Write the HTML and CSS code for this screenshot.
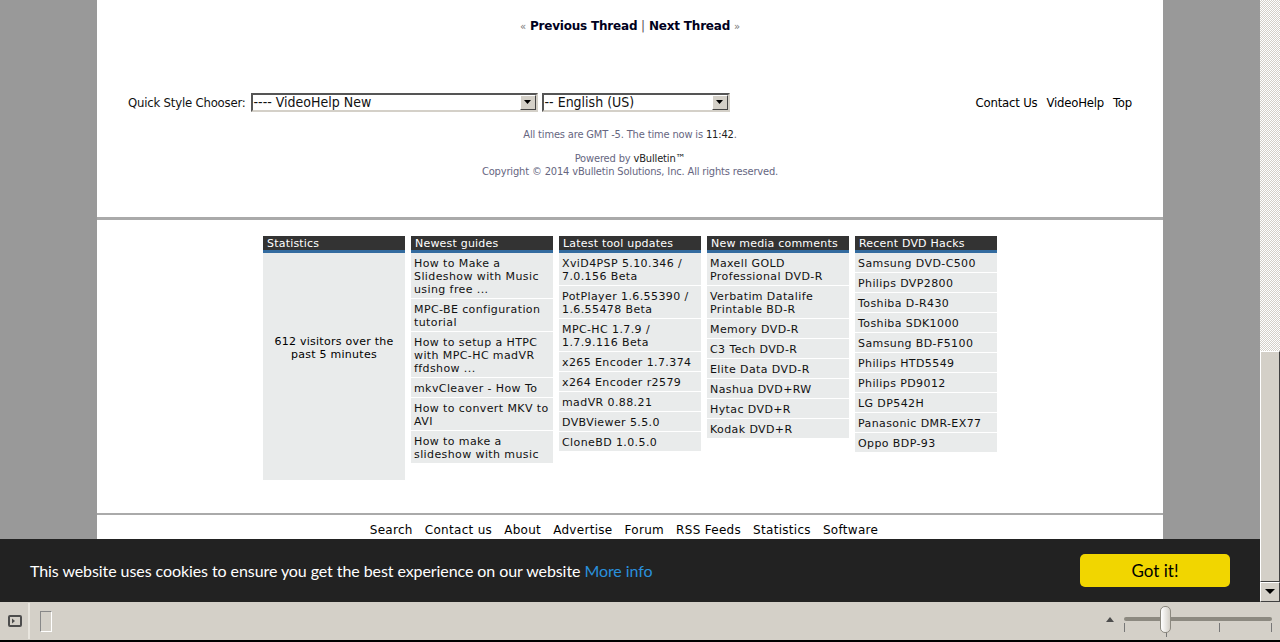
FILE: index.html
```html
<!DOCTYPE html>
<html lang="en">
<head>
<meta charset="utf-8">
<title>VideoHelp Forum</title>
<link rel="stylesheet" href="styles.css">
</head>
<body>
<div class="viewport">
  <div class="page-area">
    <div class="page">
      <div class="thread-nav">
        <span class="dim">«</span> <a href="#">Previous Thread</a> <span class="sep">|</span> <a href="#">Next Thread</a> <span class="dim">»</span>
      </div>
      <div class="chooser-row">
        <div class="chooser">
          <span class="chooser-label">Quick Style Chooser:</span>
          <div class="fake-select style-select"><span>---- VideoHelp New</span><i class="arrow"><svg width="9" height="5" viewBox="0 0 9 5"><path d="M1 0h7L4.500 4z" fill="#000"/></svg></i></div>
          <div class="fake-select lang-select"><span>-- English (US)</span><i class="arrow"><svg width="9" height="5" viewBox="0 0 9 5"><path d="M1 0h7L4.500 4z" fill="#000"/></svg></i></div>
        </div>
        <div class="chooser-links"><a href="#">Contact Us</a><a href="#">VideoHelp</a><a href="#">Top</a></div>
      </div>
      <div class="times">All times are GMT -5. The time now is <span class="dark">11:42</span>.</div>
      <div class="powered">Powered by <span class="dark">vBulletin™</span><br>Copyright © 2014 vBulletin Solutions, Inc. All rights reserved.</div>
      <div class="columns">
        <section class="col">
          <h3>Statistics</h3>
          <div class="stats">612 visitors over the past 5 minutes</div>
        </section>
        <section class="col">
          <h3>Newest guides</h3>
          <a class="row" href="#">How to Make a Slideshow with Music using free ...</a>
          <a class="row" href="#">MPC-BE configuration tutorial</a>
          <a class="row" href="#">How to setup a HTPC with MPC-HC madVR ffdshow ...</a>
          <a class="row" href="#">mkvCleaver - How To</a>
          <a class="row" href="#">How to convert MKV to AVI</a>
          <a class="row" href="#">How to make a slideshow with music</a>
        </section>
        <section class="col">
          <h3>Latest tool updates</h3>
          <a class="row" href="#">XviD4PSP 5.10.346 / 7.0.156 Beta</a>
          <a class="row" href="#">PotPlayer 1.6.55390 / 1.6.55478 Beta</a>
          <a class="row" href="#">MPC-HC 1.7.9 / 1.7.9.116 Beta</a>
          <a class="row" href="#">x265 Encoder 1.7.374</a>
          <a class="row" href="#">x264 Encoder r2579</a>
          <a class="row" href="#">madVR 0.88.21</a>
          <a class="row" href="#">DVBViewer 5.5.0</a>
          <a class="row" href="#">CloneBD 1.0.5.0</a>
        </section>
        <section class="col">
          <h3>New media comments</h3>
          <a class="row" href="#">Maxell GOLD Professional DVD-R</a>
          <a class="row" href="#">Verbatim Datalife Printable BD-R</a>
          <a class="row" href="#">Memory DVD-R</a>
          <a class="row" href="#">C3 Tech DVD-R</a>
          <a class="row" href="#">Elite Data DVD-R</a>
          <a class="row" href="#">Nashua DVD+RW</a>
          <a class="row" href="#">Hytac DVD+R</a>
          <a class="row" href="#">Kodak DVD+R</a>
        </section>
        <section class="col">
          <h3>Recent DVD Hacks</h3>
          <a class="row" href="#">Samsung DVD-C500</a>
          <a class="row" href="#">Philips DVP2800</a>
          <a class="row" href="#">Toshiba D-R430</a>
          <a class="row" href="#">Toshiba SDK1000</a>
          <a class="row" href="#">Samsung BD-F5100</a>
          <a class="row" href="#">Philips HTD5549</a>
          <a class="row" href="#">Philips PD9012</a>
          <a class="row" href="#">LG DP542H</a>
          <a class="row" href="#">Panasonic DMR-EX77</a>
          <a class="row" href="#">Oppo BDP-93</a>
        </section>
      </div>
      <nav class="footer-nav">
        <a href="#">Search</a><a href="#">Contact us</a><a href="#">About</a><a href="#">Advertise</a><a href="#">Forum</a><a href="#">RSS Feeds</a><a href="#">Statistics</a><a href="#">Software</a>
      </nav>
    </div>
    <div class="cookie">
      <p>This website uses cookies to ensure you get the best experience on our website <a href="#">More info</a></p>
      <button class="got-it" type="button">Got it!</button>
    </div>
    <div class="scrollbar">
      <div class="track"></div>
      <div class="thumb"></div>
      <div class="scroll-btn"><svg width="11" height="6" viewBox="0 0 11 6"><path d="M0 0h10L5 5z" fill="#000"/></svg></div>
    </div>
  </div>
  <div class="statusbar">
    <svg class="panel-icon" width="14" height="12" viewBox="0 0 14 12"><rect x="1" y="1" width="12" height="10" rx="1" fill="none" stroke="#4d4d4d" stroke-width="2"/><path d="M4 3.500l3 2.500-3 2.500z" fill="#4d4d4d"/></svg>
    <span class="divider"></span>
    <span class="slot"></span>
    <div class="zoom">
      <svg class="up" width="8" height="5" viewBox="0 0 8 5"><path d="M4 0l4 5H0z" fill="#4d4d4d"/></svg>
      <div class="slider">
        <div class="groove"></div>
        <div class="tick t1"></div><div class="tick t2"></div><div class="tick t3"></div><div class="tick t4"></div>
        <div class="knob"></div>
      </div>
    </div>
  </div>
</div>
</body>
</html>
```
FILE: styles.css
```css
* { box-sizing: border-box; }
html, body { margin: 0; height: 100%; overflow: hidden; }
body { font-family: "DejaVu Sans", Verdana, sans-serif; font-size: 12px; color: #000; background: #000; }
a { color: inherit; text-decoration: none; }

.viewport { display: flex; flex-direction: column; height: 640px; }
.page-area { position: relative; height: 602px; background: #999; padding-left: 97px; }
.page { width: 1066px; height: 602px; background: #fff; overflow: hidden; }

.thread-nav { padding-top: 19px; height: 91px; text-align: center; font-size: 12px; line-height: 14px; color: #00003a; }
.thread-nav a { font-weight: bold; color: #000020; letter-spacing: -0.2px; }
.thread-nav .dim { color: #777; font-size: 10px; }
.thread-nav .sep { color: #555; font-weight: normal; }

.chooser-row { display: flex; justify-content: space-between; align-items: center; height: 22px; padding: 0 31px; font-family: "DejaVu Sans Condensed", "DejaVu Sans", sans-serif; font-size: 13px; }
.chooser { display: flex; align-items: center; }
.chooser-label { margin-right: 5px; color: #111; letter-spacing: -0.2px; }
.fake-select { display: flex; justify-content: space-between; align-items: center; height: 19px; border: 2px solid; border-color: #555 #d4d0c8 #d4d0c8 #555; background: #fff; padding-left: 1px; font-size: 14px; color: #111; }
.style-select { width: 287px; margin-right: 4px; }
.lang-select { width: 188px; }
.arrow { display: flex; align-items: center; justify-content: center; width: 16px; height: 15px; background: #d4d0c8; border: 1px solid; border-color: #fff #444 #444 #fff; }
.chooser-links { display: flex; gap: 9px; letter-spacing: -0.2px; }

.times { margin-top: 15px; text-align: center; font-family: "DejaVu Sans Condensed", "DejaVu Sans", sans-serif; font-size: 11px; letter-spacing: -0.15px; line-height: 13px; color: #66667f; }
.powered { margin-top: 11px; text-align: center; font-family: "DejaVu Sans Condensed", "DejaVu Sans", sans-serif; font-size: 11px; letter-spacing: -0.15px; line-height: 13px; color: #66667f; }
.dark { color: #222; }

.columns { display: flex; justify-content: center; gap: 6px; align-items: flex-start; margin-top: 39px; padding-top: 16px; border-top: 3px solid #aaa; height: 298px; border-bottom: 2px solid #aaa; }
.col { width: 142px; display: flex; flex-direction: column; gap: 1px; }
.col h3 { margin: 0; height: 17px; background: #333; border-bottom: 3px solid #336b9f; color: #fff; font-size: 11px; font-weight: normal; line-height: 14px; padding: 1px 0 0 4px; letter-spacing: 0.2px; }
.stats { height: 227px; margin-top: -1px; display: flex; align-items: center; justify-content: center; text-align: center; background: #e9ebeb; padding: 0 3px 38px; font-size: 11px; line-height: 13px; letter-spacing: 0.25px; }
.row { display: block; padding: 4px 3px 2px; background: #e9ebeb; font-size: 11px; line-height: 13px; color: #111; letter-spacing: 0.4px; }
.col h3 + .row { margin-top: -1px; }

.footer-nav { display: flex; justify-content: center; gap: 12px; padding: 8px 12px 0 0; font-size: 12px; line-height: 14px; letter-spacing: 0.3px; }

.cookie { position: absolute; left: 0; bottom: 0; width: 1260px; height: 63px; background: #222; display: flex; align-items: center; justify-content: space-between; padding: 0 30px; font-family: Lato, sans-serif; }
.cookie p { margin: 0; color: #fff; font-size: 16px; letter-spacing: -0.08px; }
.cookie a { color: #2a90dc; }
.got-it { width: 150px; height: 33px; border: 0; border-radius: 5px; background: #f1d600; color: #000; font: 17px Lato, sans-serif; }

.scrollbar { position: absolute; top: 0; right: 0; bottom: 0; width: 20px; display: flex; flex-direction: column; }
.track { height: 351px; background-color: #fff; background-image: repeating-conic-gradient(#d4d0c8 0 25%, #fff 0 50%); background-size: 2px 2px; }
.thumb { flex: 1; background: #d4d0c8; border: 1px solid; border-color: #fff #404040 #404040 #fff; }
.scroll-btn { height: 20px; background: #d4d0c8; border: 1px solid; border-color: #fff #404040 #404040 #fff; display: flex; align-items: center; justify-content: center; }

.statusbar { height: 38px; background: #d4d0c8; display: flex; align-items: center; position: relative; }
.panel-icon { margin-left: 8px; }
.divider { width: 2px; height: 36px; margin-left: 6px; background: #e9e6df; }
.slot { width: 12px; height: 21px; margin-left: 10px; border: 1px solid; border-color: #888 #fff #fff #888; }
.zoom { margin-left: auto; display: flex; align-items: center; margin-right: 8px; }
.up { margin-right: 10px; margin-top: -4px; }
.slider { position: relative; width: 148px; height: 38px; }
.groove { position: absolute; left: 0; right: 0; top: 15px; height: 4px; border-radius: 2px; background: #8c8980; }
.tick { position: absolute; width: 1px; background: #777; top: 21px; height: 9px; }
.t1 { left: 0; }
.t2 { left: 42px; height: 11px; top: 24px; }
.t3 { left: 95px; }
.t4 { left: 147px; }
.knob { position: absolute; left: 36px; top: 4px; width: 11px; height: 27px; border-radius: 5px; background: linear-gradient(90deg, #fff, #d4d0c8); border: 1px solid #8c8980; }
```
